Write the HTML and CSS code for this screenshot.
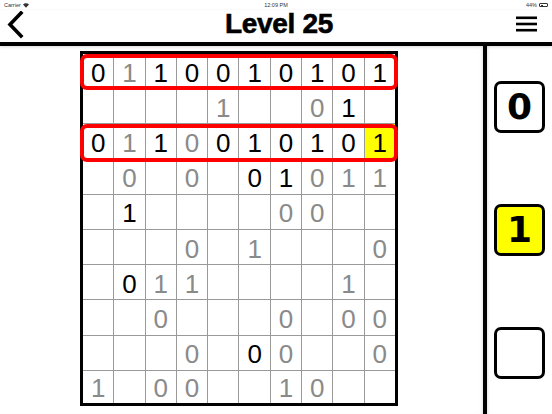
FILE: index.html
```html
<!DOCTYPE html>
<html>
<head>
<meta charset="utf-8">
<link rel="stylesheet" href="styles.css">
</head>
<body>
<div class="status">
  <span class="carrier">Carrier
    <svg class="wifi" width="6" height="5" viewBox="0 0 6 5"><path d="M0 1.6 A4.2 4.2 0 0 1 6 1.6 L3 4.8 Z" fill="#333"/></svg>
  </span>
  <span class="time">12:09 PM</span>
  <span class="batt">44% <span class="battery"><span class="battery-fill"></span></span></span>
</div>
<header class="topbar">
  <div class="back">
    <svg width="20" height="28" viewBox="0 0 20 28"><polyline points="15,2 4,13.5 15,25" fill="none" stroke="#000" stroke-width="3.6" stroke-linecap="square"/></svg>
  </div>
  <h1 class="title">Level 25</h1>
  <div class="menu">
    <svg width="21" height="16" viewBox="0 0 21 16"><rect x="0" y="0.5" width="21" height="2.6" fill="#000"/><rect x="0" y="6.7" width="21" height="2.6" fill="#000"/><rect x="0" y="12.9" width="21" height="2.6" fill="#000"/></svg>
  </div>
</header>
<main class="main">
  <section class="board-area">
    <div class="board">
      <div class="cell">0</div><div class="cell u">1</div><div class="cell">1</div><div class="cell">0</div><div class="cell">0</div><div class="cell">1</div><div class="cell">0</div><div class="cell">1</div><div class="cell">0</div><div class="cell">1</div>
      <div class="cell"></div><div class="cell"></div><div class="cell"></div><div class="cell"></div><div class="cell u">1</div><div class="cell"></div><div class="cell"></div><div class="cell u">0</div><div class="cell">1</div><div class="cell"></div>
      <div class="cell">0</div><div class="cell u">1</div><div class="cell">1</div><div class="cell u">0</div><div class="cell">0</div><div class="cell">1</div><div class="cell">0</div><div class="cell">1</div><div class="cell">0</div><div class="cell sel">1</div>
      <div class="cell"></div><div class="cell u">0</div><div class="cell"></div><div class="cell u">0</div><div class="cell"></div><div class="cell">0</div><div class="cell">1</div><div class="cell u">0</div><div class="cell u">1</div><div class="cell u">1</div>
      <div class="cell"></div><div class="cell">1</div><div class="cell"></div><div class="cell"></div><div class="cell"></div><div class="cell"></div><div class="cell u">0</div><div class="cell u">0</div><div class="cell"></div><div class="cell"></div>
      <div class="cell"></div><div class="cell"></div><div class="cell"></div><div class="cell u">0</div><div class="cell"></div><div class="cell u">1</div><div class="cell"></div><div class="cell"></div><div class="cell"></div><div class="cell u">0</div>
      <div class="cell"></div><div class="cell">0</div><div class="cell u">1</div><div class="cell u">1</div><div class="cell"></div><div class="cell"></div><div class="cell"></div><div class="cell"></div><div class="cell u">1</div><div class="cell"></div>
      <div class="cell"></div><div class="cell"></div><div class="cell u">0</div><div class="cell"></div><div class="cell"></div><div class="cell"></div><div class="cell u">0</div><div class="cell"></div><div class="cell u">0</div><div class="cell u">0</div>
      <div class="cell"></div><div class="cell"></div><div class="cell"></div><div class="cell u">0</div><div class="cell"></div><div class="cell">0</div><div class="cell u">0</div><div class="cell"></div><div class="cell"></div><div class="cell u">0</div>
      <div class="cell u">1</div><div class="cell"></div><div class="cell u">0</div><div class="cell u">0</div><div class="cell"></div><div class="cell"></div><div class="cell u">1</div><div class="cell u">0</div><div class="cell"></div><div class="cell"></div>
      <div class="row-mark mark-1"></div>
      <div class="row-mark mark-3"></div>
    </div>
  </section>
  <aside class="palette">
    <div class="pick">0</div>
    <div class="pick pick-on">1</div>
    <div class="pick"></div>
  </aside>
</main>
</body>
</html>
```
FILE: styles.css
```css
* { box-sizing: border-box; }
html, body { margin: 0; padding: 0; }
body {
  width: 552px;
  height: 414px;
  overflow: hidden;
  background: #fff;
  font-family: "Liberation Sans", Arial, sans-serif;
  color: #000;
}
.status {
  height: 10px;
  display: grid;
  grid-template-columns: 1fr auto 1fr;
  align-items: center;
  padding: 0 4px;
  font-size: 5.5px;
  color: #333;
}
.carrier { display: flex; align-items: center; gap: 2px; }
.time { text-align: center; }
.batt { justify-self: end; display: flex; align-items: center; gap: 2px; }
.battery {
  width: 9px; height: 4px;
  border: 0.7px solid #333;
  border-radius: 1px;
  display: flex;
  padding: 0.5px;
}
.battery-fill { width: 44%; background: #333; }
.topbar {
  height: 36px;
  border-bottom: 4px solid #000;
  display: grid;
  grid-template-columns: 1fr auto 1fr;
  align-items: start;
  box-shadow: 0 1px 3px rgba(0,0,0,0.15);
  position: relative;
  z-index: 2;
}
.back { padding: 1px 0 0 6px; }
.back svg { display: block; }
.title {
  margin: 0 0 0 6px;
  font-family: "Liberation Sans", Arial, sans-serif;
  font-weight: 700;
  font-size: 28px;
  line-height: 28px;
  letter-spacing: -0.3px;
  -webkit-text-stroke: 0.6px #000;
}
.menu { justify-self: end; padding: 6px 15px 0 0; }
.menu svg { display: block; }
.main {
  display: flex;
  height: 368px;
}
.board-area {
  width: 483px;
  padding: 5px 0 0 80px;
  box-shadow: inset -3px 0 3px -2px rgba(0,0,0,0.12);
}
.board {
  position: relative;
  box-sizing: content-box;
  width: 312px;
  height: 349px;
  border: 3px solid #000;
  background: #9a9a9a;
  display: grid;
  grid-template-columns: repeat(10, 1fr);
  grid-template-rows: repeat(9, 34.2px) 1fr;
  gap: 1px;
}
.cell {
  background: #fff;
  display: flex;
  align-items: center;
  justify-content: center;
  font-size: 26px;
  line-height: 1;
  padding-top: 3px;
  color: #000;
}
.cell.u { color: #8a8a8a; }
.cell.sel { background: #ffff00; }
.row-mark {
  position: absolute;
  left: -3px;
  width: 318px;
  border: 4px solid #ff0000;
  border-radius: 7px;
}
.mark-1 { top: 0; height: 35.5px; }
.mark-3 { top: 70px; height: 38px; }
.palette {
  width: 69px;
  border-left: 4px solid #000;
  display: flex;
  flex-direction: column;
  justify-content: space-around;
  align-items: center;
  box-shadow: inset 3px 0 3px -2px rgba(0,0,0,0.12);
}
.pick {
  width: 51px;
  height: 52px;
  border: 3px solid #000;
  border-radius: 7px;
  background: #fff;
  display: flex;
  align-items: center;
  justify-content: center;
  font-family: "DejaVu Sans", sans-serif;
  font-weight: 700;
  font-size: 36px;
  line-height: 1;
}
.pick-on { background: #ffff00; }
```
